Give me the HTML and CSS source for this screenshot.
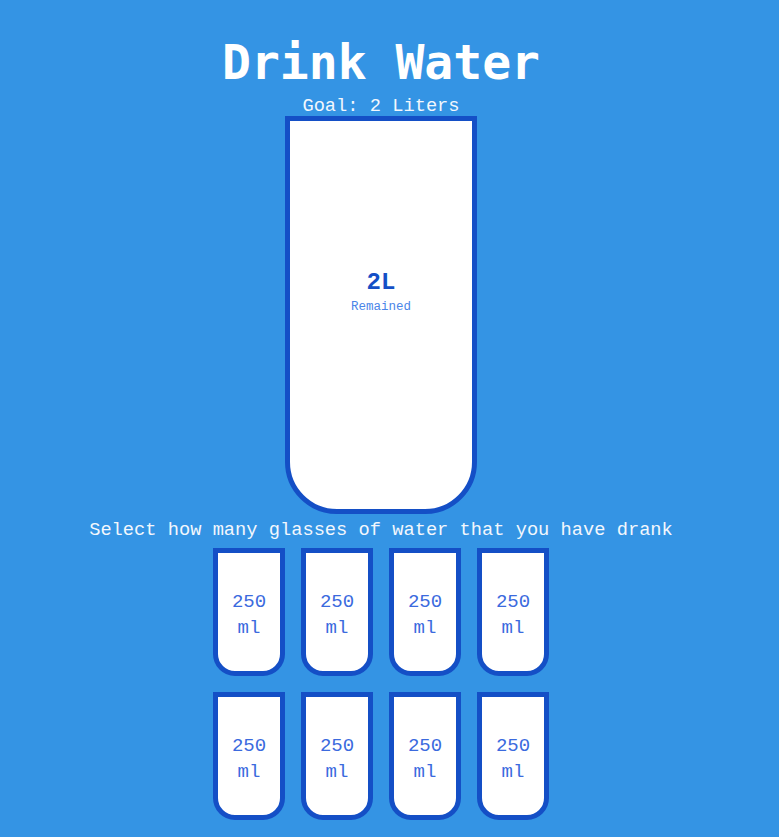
FILE: index.html
```html
<!DOCTYPE html>
<html lang="en">
<head>
<meta charset="UTF-8">
<title>Drink Water</title>
<link rel="stylesheet" href="styles.css">
</head>
<body>
  <h1 class="title">Drink Water</h1>
  <h3 class="goal">Goal: 2 Liters</h3>
  <div class="cup">
    <div class="remained">
      <span class="liters">2L</span>
      <small class="label">Remained</small>
    </div>
  </div>
  <p class="text">Select how many glasses of water that you have drank</p>
  <div class="cups">
    <div class="cup-small">250<br>ml</div>
    <div class="cup-small">250<br>ml</div>
    <div class="cup-small">250<br>ml</div>
    <div class="cup-small">250<br>ml</div>
    <div class="cup-small">250<br>ml</div>
    <div class="cup-small">250<br>ml</div>
    <div class="cup-small">250<br>ml</div>
    <div class="cup-small">250<br>ml</div>
  </div>
</body>
</html>
```

FILE: styles.css
```css
* {
  box-sizing: border-box;
}

html, body {
  margin: 0;
  height: 100%;
  overflow: hidden;
}

body {
  background-color: #3494e4;
  color: #ffffff;
  font-family: "Liberation Mono", "DejaVu Sans Mono", monospace;
  display: flex;
  flex-direction: column;
  align-items: center;
  padding: 38px 17px 0 0;
}

.title {
  margin: 0;
  font-family: "DejaVu Sans Mono", "Liberation Mono", monospace;
  font-size: 48px;
  line-height: 48px;
  font-weight: 700;
}

.goal {
  margin: 10px 0 0;
  font-size: 18.72px;
  line-height: 20px;
  font-weight: 400;
  color: #f2f7fd;
}

.cup {
  width: 192px;
  height: 398px;
  background-color: #ffffff;
  border: 5px solid #144fc6;
  border-radius: 0 0 52px 52px;
  color: #144fc6;
  display: flex;
  flex-direction: column;
  align-items: center;
  justify-content: center;
  padding-bottom: 44px;
}

.remained {
  display: flex;
  flex-direction: column;
  align-items: center;
  text-align: center;
}

.liters {
  font-size: 24px;
  line-height: 26px;
  font-weight: 700;
}

.label {
  margin-top: 2px;
  font-size: 12.5px;
  line-height: 18px;
  color: #4a85e8;
}

.text {
  margin: 5px 0 0;
  font-size: 18.72px;
  line-height: 22px;
  color: #f2f7fd;
}

.cups {
  margin-top: 7px;
  display: grid;
  grid-template-columns: repeat(4, 72px);
  gap: 16px;
}

.cup-small {
  width: 72px;
  height: 128px;
  background-color: #ffffff;
  border: 5px solid #144fc6;
  border-radius: 0 0 22px 22px;
  color: #3b6ade;
  font-size: 19px;
  line-height: 26px;
  text-align: center;
  display: flex;
  align-items: center;
  justify-content: center;
  padding-top: 6px;
}
```
